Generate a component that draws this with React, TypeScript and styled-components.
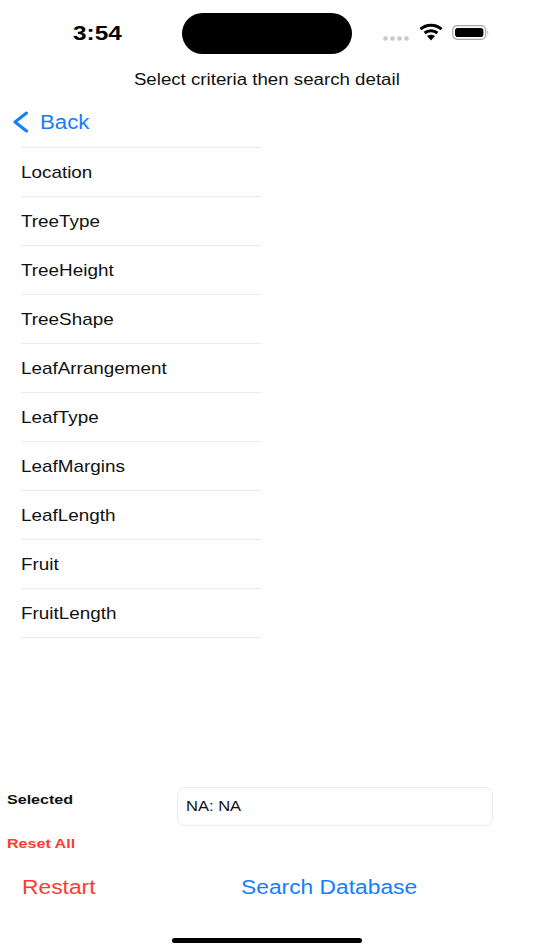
import React from "react";
import styled, { createGlobalStyle } from "styled-components";

const CRITERIA = [
  "Location",
  "TreeType",
  "TreeHeight",
  "TreeShape",
  "LeafArrangement",
  "LeafType",
  "LeafMargins",
  "LeafLength",
  "Fruit",
  "FruitLength",
];

const GlobalStyle = createGlobalStyle`
  html, body {
    margin: 0;
    padding: 0;
    background: #fff;
  }
  body {
    font-family: "Liberation Sans", Arial, sans-serif;
    color: #000;
  }
`;

// the whole reference is drawn a bit wider than tall, so text gets stretched
const Wide = styled.span<{ $x?: number; $center?: boolean }>`
  display: inline-block;
  white-space: nowrap;
  transform: scaleX(${({ $x }) => $x ?? 1.14});
  transform-origin: ${({ $center }) => ($center ? "center" : "left")};
`;

const Screen = styled.div`
  width: 534px;
  height: 950px;
  display: flex;
  flex-direction: column;
  overflow: hidden;
  background: #fff;
`;

const StatusBar = styled.div`
  height: 67px;
  flex: none;
  display: grid;
  grid-template-columns: 182px 170px 1fr;
  padding-top: 13px;
  box-sizing: border-box;
`;

const Time = styled.div`
  height: 41px;
  line-height: 40px;
  padding-left: 73px;
  font-size: 21px;
  font-weight: 700;
`;

const Island = styled.div`
  height: 41px;
  background: #000;
  border-radius: 21px;
`;

const StatusIcons = styled.div`
  height: 41px;
  display: flex;
  align-items: center;
  padding-left: 31px;
`;

const Title = styled.div`
  height: 25px;
  line-height: 25px;
  flex: none;
  text-align: center;
  font-size: 16px;
  color: #111;
`;

const BackRow = styled.div`
  height: 55px;
  flex: none;
  display: flex;
  align-items: center;
  padding-left: 12px;
  gap: 12px;
  box-sizing: border-box;
  padding-top: 5px;
  color: #147efb;
  font-size: 20px;
  line-height: 25px;
`;

const List = styled.div`
  width: 240px;
  margin-left: 21px;
  flex: none;
  border-top: 1px solid #ebebeb;
`;

const Row = styled.div`
  height: 48px;
  line-height: 49px;
  border-bottom: 1px solid #ebebeb;
  font-size: 17px;
  color: #111;
`;

const Spacer = styled.div`
  flex: 1;
`;

const SelectedRow = styled.div`
  flex: none;
  display: grid;
  grid-template-columns: 177px 316px;
`;

const SmallLabel = styled.div<{ $danger?: boolean; $top?: number }>`
  padding: ${({ $top }) => $top ?? 0}px 0 0 7px;
  font-size: 13.5px;
  font-weight: 700;
  color: ${({ $danger }) => ($danger ? "#ff3b30" : "#111")};
`;

const SelectedBox = styled.div`
  height: 39px;
  line-height: 37px;
  box-sizing: border-box;
  border: 1px solid #ececec;
  border-radius: 7px;
  padding-left: 8px;
  font-size: 14.5px;
  color: #111;
`;

const ResetRow = styled.div`
  height: 21px;
  margin-top: 10px;
  flex: none;
`;

const Actions = styled.div`
  flex: none;
  display: grid;
  grid-template-columns: 241px 1fr;
  margin-top: 19px;
  font-size: 20px;
`;

const Restart = styled.div`
  padding-left: 22px;
  color: #ff3b30;
`;

const SearchButton = styled.div`
  color: #147efb;
`;

const HomeIndicator = styled.div`
  width: 190px;
  height: 5px;
  margin: 39px auto 7px;
  background: #000;
  border-radius: 3px;
  flex: none;
`;

const SignalDots = () => (
  <svg width="27" height="5" viewBox="0 0 27 5" style={{ marginTop: 9 }}>
    {[2.5, 9.5, 16.5, 23.5].map((cx) => (
      <circle key={cx} cx={cx} cy="2.5" r="2.3" fill="#c9c9c9" />
    ))}
  </svg>
);

const Wifi = () => (
  <svg width="24" height="18" viewBox="0 0 24 18" style={{ marginLeft: 9, marginTop: -4 }}>
    <path d="M1.5 6.2C7.4 1 16.6 1 22.5 6.2" fill="none" stroke="#000" strokeWidth="3" />
    <path d="M5.6 10C9.2 7 14.8 7 18.4 10" fill="none" stroke="#000" strokeWidth="3" />
    <path d="M8 13L12 17.5L16 13C13.6 11.4 10.4 11.4 8 13Z" fill="#000" />
  </svg>
);

const Battery = () => (
  <svg width="38" height="16" viewBox="0 0 38 16" style={{ marginLeft: 9, marginTop: -2 }}>
    <rect x="0.7" y="0.7" width="33" height="13.6" rx="4.5" fill="none" stroke="#a8a8a8" strokeWidth="1.2" />
    <rect x="3" y="3" width="28.4" height="9" rx="2.8" fill="#000" />
    <path d="M35.4 5.6C36.6 6 36.6 9 35.4 9.4Z" fill="#a8a8a8" />
  </svg>
);

const BackChevron = () => (
  <svg width="16" height="24" viewBox="0 0 16 24">
    <path d="M14.5 3L3 12L14.5 21" fill="none" stroke="#147efb" strokeWidth="3" strokeLinecap="round" strokeLinejoin="round" />
  </svg>
);

export default function App() {
  return (
    <Screen>
      <GlobalStyle />
      <StatusBar>
        <Time>
          <Wide $x={1.16}>3:54</Wide>
        </Time>
        <Island />
        <StatusIcons>
          <SignalDots />
          <Wifi />
          <Battery />
        </StatusIcons>
      </StatusBar>
      <Title>
        <Wide $x={1.168} $center>
          Select criteria then search detail
        </Wide>
      </Title>
      <BackRow>
        <BackChevron />
        <Wide $x={1.11}>Back</Wide>
      </BackRow>
      <List>
        {CRITERIA.map((name) => (
          <Row key={name}>
            <Wide $x={1.11}>{name}</Wide>
          </Row>
        ))}
      </List>
      <Spacer />
      <SelectedRow>
        <SmallLabel $top={5}>
          <Wide $x={1.19}>Selected</Wide>
        </SmallLabel>
        <SelectedBox>
          <Wide>NA: NA</Wide>
        </SelectedBox>
      </SelectedRow>
      <ResetRow>
        <SmallLabel $danger>
          <Wide $x={1.19}>Reset All</Wide>
        </SmallLabel>
      </ResetRow>
      <Actions>
        <Restart>
          <Wide>Restart</Wide>
        </Restart>
        <SearchButton>
          <Wide>Search Database</Wide>
        </SearchButton>
      </Actions>
      <HomeIndicator />
    </Screen>
  );
}
